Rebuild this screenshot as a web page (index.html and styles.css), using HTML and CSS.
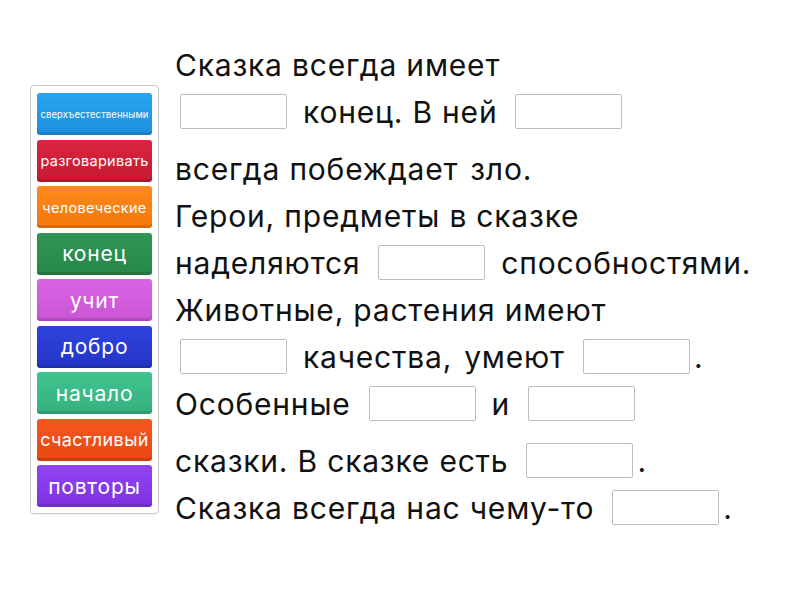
FILE: index.html
```html
<!DOCTYPE html>
<html lang="ru">
<head>
<meta charset="utf-8">
<link rel="stylesheet" href="styles.css">
</head>
<body>
<div class="page">
  <div class="bank">
    <div class="tile c-blue xs">сверхъестественными</div>
    <div class="tile c-red sm">разговаривать</div>
    <div class="tile c-orange sm">человеческие</div>
    <div class="tile c-green">конец</div>
    <div class="tile c-pink">учит</div>
    <div class="tile c-navy">добро</div>
    <div class="tile c-mint">начало</div>
    <div class="tile c-tomato md">счастливый</div>
    <div class="tile c-purple">повторы</div>
  </div>
  <div class="text">
    <div class="line">Сказка всегда имеет</div>
    <div class="line"><span class="gap"></span><span class="w">конец. В ней</span><span class="gap"></span></div>
    <div class="line extra">всегда побеждает<span class="sp"></span>зло.</div>
    <div class="line">Герои, предметы в сказке</div>
    <div class="line"><span class="w">наделяются</span><span class="gap"></span><span class="w">способностями.</span></div>
    <div class="line">Животные, растения имеют</div>
    <div class="line"><span class="gap"></span><span class="w">качества,<span class="sp"></span>умеют</span><span class="gap"></span><span class="dot">.</span></div>
    <div class="line"><span class="w">Особенные</span><span class="gap"></span><span class="w">и</span><span class="gap"></span></div>
    <div class="line extra"><span class="w">сказки. В сказке есть</span><span class="gap"></span><span class="dot">.</span></div>
    <div class="line"><span class="w">Сказка всегда нас чему-то</span><span class="gap"></span><span class="dot">.</span></div>
  </div>
</div>
</body>
</html>
```
FILE: styles.css
```css
html, body {
  margin: 0;
  padding: 0;
  background: #ffffff;
}
body {
  font-family: Inter, "Noto Sans", sans-serif;
  color: #111111;
}
.page {
  display: flex;
  align-items: flex-start;
  padding: 41px 0 0 30px;
}
.bank {
  margin-top: 44px;
  width: 115px;
  padding: 7px 6px 6px 6px;
  border: 1px solid #c9c9c9;
  border-radius: 4px;
  display: flex;
  flex-direction: column;
  gap: 4.5px;
  box-shadow: 0 1px 1px rgba(0,0,0,0.06);
}
.tile {
  height: 42px;
  border-radius: 3px;
  color: #ffffff;
  font-size: 21px;
  letter-spacing: 0.8px;
  display: flex;
  align-items: center;
  justify-content: center;
  white-space: nowrap;
  box-shadow: inset 0 -3px 0 rgba(0,0,0,0.12);
}
.tile.xs { font-size: 9.5px; letter-spacing: 0.1px; }
.tile.sm { font-size: 14.5px; letter-spacing: 0.3px; }
.tile.md { font-size: 18px; letter-spacing: 0.4px; }
.c-blue { background: linear-gradient(#27a6f0, #1d8fdc); }
.c-red { background: linear-gradient(#da2540, #c61a31); }
.c-orange { background: linear-gradient(#ff8a1c, #f5780c); }
.c-green { background: linear-gradient(#2f9656, #268749); }
.c-pink { background: linear-gradient(#d964e4, #c955d4); }
.c-navy { background: linear-gradient(#2f43dc, #2434c6); }
.c-mint { background: linear-gradient(#40c48f, #35b07f); }
.c-tomato { background: linear-gradient(#f8561f, #e84812); }
.c-purple { background: linear-gradient(#9143f2, #7f33e0); }

.text {
  margin-left: 16px;
  font-size: 30px;
  letter-spacing: 0.8px;
  display: flex;
  flex-direction: column;
}
.line {
  height: 47px;
  display: flex;
  align-items: center;
  white-space: nowrap;
}
.line.extra { margin-top: 10px; }
.sp { display: inline-block; width: 12px; }
.gap {
  display: inline-block;
  width: 105px;
  height: 33px;
  border: 1px solid #bdbdbd;
  border-radius: 2px;
  margin: 0 16px 0 5px;
  background: #fff;
}
.line .gap:last-child { margin-right: 0; }
.w + .gap { margin-left: 18px; }
.gap + .dot { margin-left: -12px; }
.dot { display: inline-block; }
```
